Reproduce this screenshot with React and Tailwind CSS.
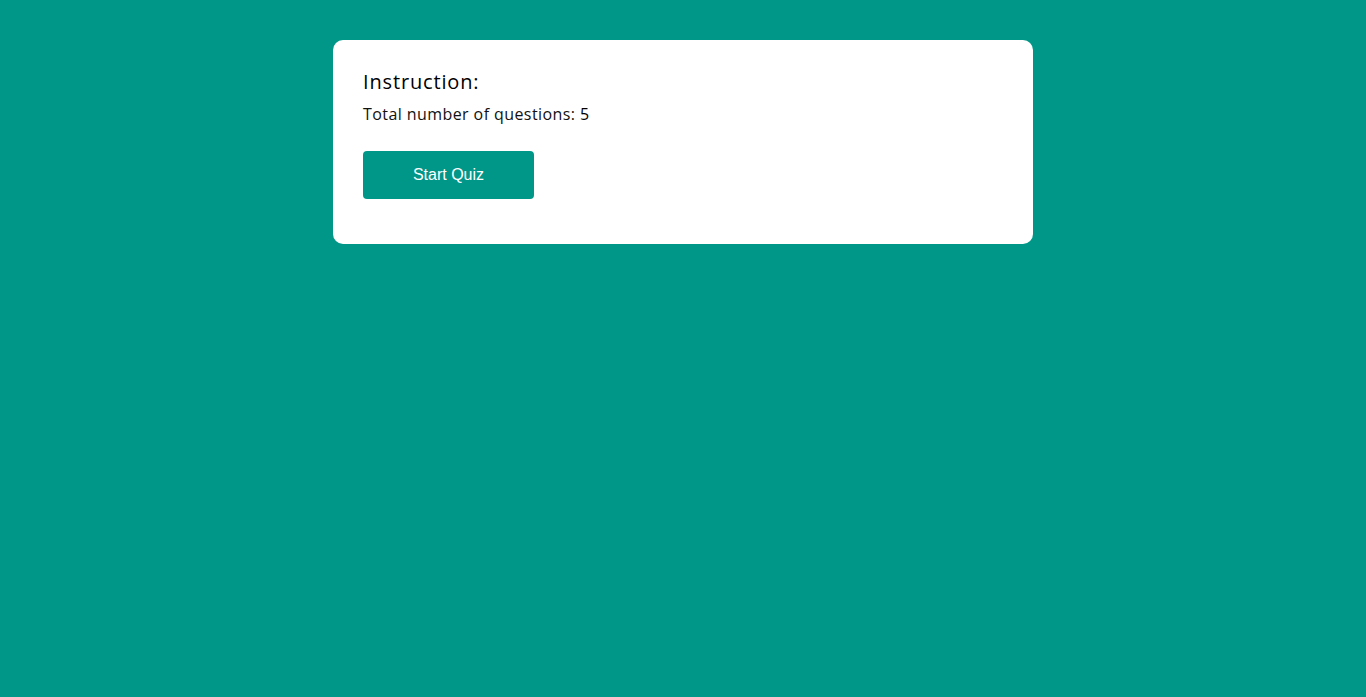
export default function App() {
  return (
    <div className="min-h-[697px] w-full bg-[#009688] pt-10">
      <div className="mx-auto w-[700px] rounded-[10px] bg-white px-[30px] pt-[28px] pb-[45px]">
        <h2 className="text-[20px] leading-[28px] tracking-[0.85px] text-black font-['Open_Sans',sans-serif] font-normal">Instruction:</h2>
        <p className="mt-[8px] text-[16px] leading-[20px] tracking-[0.42px] text-[#111] font-['Open_Sans',sans-serif]">
          Total number of questions: <span className="text-black">5</span>
        </p>
        <button className="mt-[27px] h-[48px] w-[171px] rounded-[4px] bg-[#009688] text-white text-[16px] font-['Liberation_Sans',Arial,sans-serif]">
          Start Quiz
        </button>
      </div>
    </div>
  );
}
